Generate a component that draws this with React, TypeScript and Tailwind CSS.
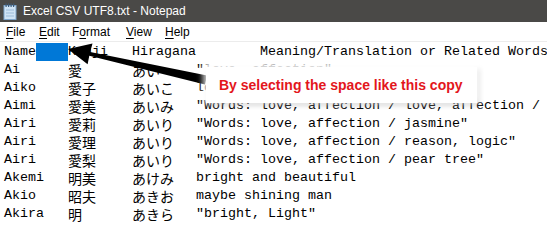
type Row = { name: string; kanji: string; kana: string; meaning: string };

const rows: Row[] = [
  { name: "Ai", kanji: "愛", kana: "あい", meaning: '"love, affection"' },
  { name: "Aiko", kanji: "愛子", kana: "あいこ", meaning: "love child" },
  { name: "Aimi", kanji: "愛美", kana: "あいみ", meaning: '"Words: love, affection / love, affection / beauty"' },
  { name: "Airi", kanji: "愛莉", kana: "あいり", meaning: '"Words: love, affection / jasmine"' },
  { name: "Airi", kanji: "愛理", kana: "あいり", meaning: '"Words: love, affection / reason, logic"' },
  { name: "Airi", kanji: "愛梨", kana: "あいり", meaning: '"Words: love, affection / pear tree"' },
  { name: "Akemi", kanji: "明美", kana: "あけみ", meaning: "bright and beautiful" },
  { name: "Akio", kanji: "昭夫", kana: "あきお", meaning: "maybe shining man" },
  { name: "Akira", kanji: "明", kana: "あきら", meaning: '"bright, Light"' },
];

const mono = "font-['Liberation_Mono',monospace] text-[13.33px] leading-[18px] shrink-0";
const cjk = "font-['Noto_Sans_CJK_JP',sans-serif] text-[14px] leading-[18px] shrink-0";

function NotepadIcon() {
  return (
    <svg width="14" height="17" viewBox="0 0 14 17">
      <rect x="1" y="2.5" width="12" height="14" fill="#cfe3f5" stroke="#7fa6cc" strokeWidth="1" />
      <line x1="3" y1="7" x2="11" y2="7" stroke="#9bbbd9" />
      <line x1="3" y1="10" x2="11" y2="10" stroke="#9bbbd9" />
      <line x1="3" y1="13" x2="11" y2="13" stroke="#9bbbd9" />
      {[3, 5.5, 8, 10.5].map((x) => (
        <rect key={x} x={x - 0.5} y="0.5" width="1.2" height="3.5" fill="#3c5a78" />
      ))}
    </svg>
  );
}

const menus = [
  { pre: "", key: "F", post: "ile", w: "w-[33px]" },
  { pre: "", key: "E", post: "dit", w: "w-[33px]" },
  { pre: "F", key: "o", post: "rmat", w: "w-[54px]" },
  { pre: "", key: "V", post: "iew", w: "w-[39px]" },
  { pre: "", key: "H", post: "elp", w: "w-[39px]" },
];

export default function App() {
  return (
    <div className="relative w-[547px] h-[241px] overflow-hidden bg-white">
      <div className="h-[22px] bg-[#4a4947] flex items-center pl-[3px] gap-[6px]">
        <NotepadIcon />
        <span className="font-['Liberation_Sans',sans-serif] text-[12px] text-white leading-none">
          Excel CSV UTF8.txt - Notepad
        </span>
      </div>

      <div className="h-[19px] flex items-center pl-[6px] font-['Liberation_Sans',sans-serif] text-[12px] leading-[16px] text-black">
        {menus.map((m) => (
          <span key={m.key + m.post} className={m.w}>
            {m.pre}
            <span className="underline underline-offset-[2px]">{m.key}</span>
            {m.post}
          </span>
        ))}
      </div>
      <div className="h-px bg-[#ececec]" />

      <div className="pt-[1px] text-black whitespace-nowrap">
        <div className="flex h-[18px] items-center pl-[4px] overflow-hidden">
          <span className={`${mono} w-[32px]`}>Name</span>
          <span className="w-[32px] h-[18px] shrink-0 bg-[#0078d7]" />
          <span className={`${mono} w-[64px]`}>Kanji</span>
          <span className={`${mono} w-[128px]`}>Hiragana</span>
          <span className={mono}>Meaning/Translation or Related Words</span>
        </div>
        {rows.map((r, i) => (
          <div key={i} className="flex h-[18px] items-center pl-[4px] overflow-hidden">
            <span className={`${mono} w-[64px]`}>{r.name}</span>
            <span className={`${cjk} w-[64px]`}>{r.kanji}</span>
            <span className={`${cjk} w-[64px]`}>{r.kana}</span>
            <span className={mono}>{r.meaning}</span>
          </div>
        ))}
      </div>

      <svg className="absolute inset-0 pointer-events-none" width="547" height="241">
        <polygon points="68,49 92.5,43.5 90.2,51.9 207,75.6 205,84.4 89.3,55.8 87.6,64.2" fill="#000" />
      </svg>

      <div className="absolute left-[206px] top-[67px] w-[271px] h-[36px] bg-white flex items-center pl-[13px] shadow-[0_-3px_6px_3px_rgba(255,255,255,0.85),2px_2px_5px_rgba(0,0,0,0.22)]">
        <span className="font-['Liberation_Sans',sans-serif] font-bold text-[14px] leading-[18px] text-[#e3161c]">
          By selecting the space like this copy
        </span>
      </div>
    </div>
  );
}
